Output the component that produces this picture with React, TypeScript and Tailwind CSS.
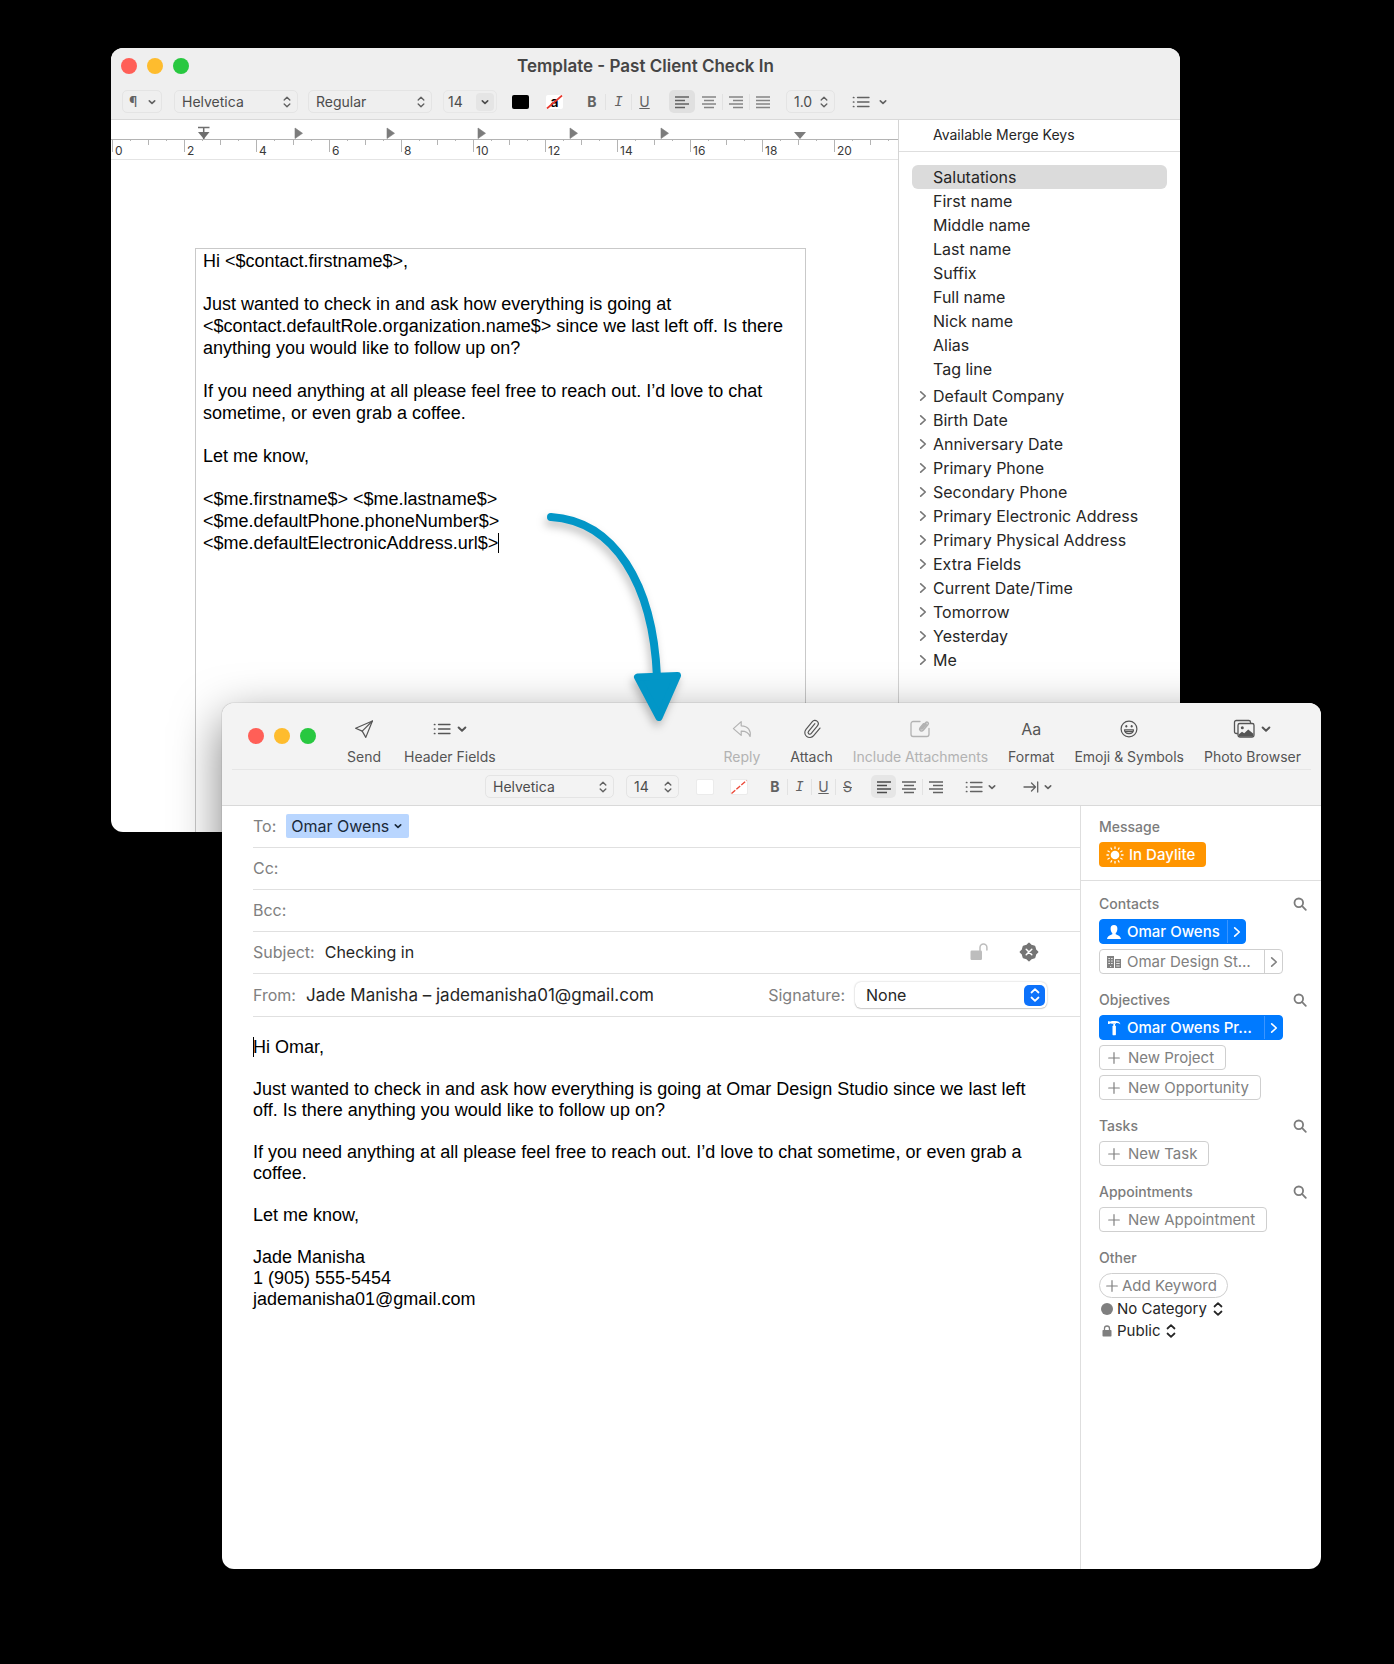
import React, { type ReactNode } from 'react'

/* ---------- icons ---------- */

function ChevronDown({ className = '' }: { className?: string }) {
  return (
    <svg viewBox="0 0 10 10" className={`size-2.5 shrink-0 ${className}`} fill="none" stroke="currentColor" strokeWidth="1.6" strokeLinecap="round" strokeLinejoin="round" aria-hidden="true">
      <path d="M2.300 3.800 5 6.400 7.700 3.800" />
    </svg>
  )
}

function ChevronRight({ className = '' }: { className?: string }) {
  return (
    <svg viewBox="0 0 10 12" className={`h-3 w-2.5 shrink-0 ${className}`} fill="none" stroke="currentColor" strokeWidth="1.6" strokeLinecap="round" strokeLinejoin="round" aria-hidden="true">
      <path d="M2.700 1.800 7.300 6l-4.600 4.200" />
    </svg>
  )
}

function UpDown({ className = '' }: { className?: string }) {
  return (
    <svg viewBox="0 0 10 14" className={`h-3.5 w-2.5 shrink-0 ${className}`} fill="none" stroke="currentColor" strokeWidth="1.4" strokeLinecap="round" strokeLinejoin="round" aria-hidden="true">
      <path d="M2.200 5 5 2.300 7.800 5M2.200 9 5 11.700 7.800 9" />
    </svg>
  )
}

function AlignIcon({ kind }: { kind: 'left' | 'center' | 'right' | 'justify' }) {
  const d = {
    left: 'M1 2h14M1 5.5h10M1 9h14M1 12.5h10',
    center: 'M1 2h14M3 5.5h10M1 9h14M3 12.5h10',
    right: 'M1 2h14M5 5.5h10M1 9h14M5 12.5h10',
    justify: 'M1 2h14M1 5.5h14M1 9h14M1 12.5h14',
  }[kind]
  return (
    <svg viewBox="0 0 16 14" className="h-3.5 w-4" fill="none" stroke="currentColor" strokeWidth="1.4" aria-hidden="true">
      <path d={d} />
    </svg>
  )
}

function ListIcon() {
  return (
    <svg viewBox="0 0 18 14" className="h-3.5 w-[18px] shrink-0" fill="none" stroke="currentColor" strokeWidth="1.3" strokeLinecap="round" aria-hidden="true">
      <path d="M5.500 2.500H17M5.500 7H17M5.500 11.500H17" />
      <path d="M1.500 2.500h.3M1.500 7h.3M1.500 11.500h.3" strokeWidth="1.700" />
    </svg>
  )
}

function SearchIcon() {
  return (
    <svg viewBox="0 0 14 14" className="size-3.5" fill="none" stroke="currentColor" strokeWidth="1.8" strokeLinecap="round" aria-hidden="true">
      <circle cx="5.8" cy="5.8" r="4.3" />
      <path d="m9.200 9.200 3.600 3.600" />
    </svg>
  )
}

function PlusIcon() {
  return (
    <svg viewBox="0 0 12 12" className="size-3 shrink-0" fill="none" stroke="currentColor" strokeWidth="1.2" strokeLinecap="round" aria-hidden="true">
      <path d="M6 .7v10.600M.7 6h10.600" />
    </svg>
  )
}

function SendIcon() {
  return (
    <svg viewBox="0 0 20 20" className="size-5" fill="none" stroke="currentColor" strokeWidth="1.2" strokeLinejoin="round" strokeLinecap="round" aria-hidden="true">
      <path d="M18.400 2 1.600 9.200l6.600 2.900L11.800 18.400Z" />
      <path d="M18.400 2 8.200 12.100" />
    </svg>
  )
}

function ReplyIcon() {
  return (
    <svg viewBox="0 0 20 20" className="size-5" fill="none" stroke="currentColor" strokeWidth="1.2" strokeLinejoin="round" aria-hidden="true">
      <path d="M9.200 2.600 1.400 9.600l7.800 6.800v-4.200c4.600-.1 7.200 1 8.900 5.200 1-5.300-1.600-10.400-8.900-10.600Z" />
    </svg>
  )
}

function ClipIcon() {
  return (
    <svg viewBox="0 0 24 24" className="size-5 rotate-[-5deg]" fill="none" stroke="currentColor" strokeWidth="1.400" strokeLinecap="round" strokeLinejoin="round" aria-hidden="true">
      <path d="m16 6-8.414 8.586a2 2 0 0 0 2.829 2.829l8.414-8.586a4 4 0 1 0-5.657-5.657l-8.379 8.551a6 6 0 1 0 8.485 8.485l8.379-8.551" />
    </svg>
  )
}

function IncludeIcon() {
  return (
    <svg viewBox="0 0 22 20" className="h-5 w-[22px]" fill="none" stroke="currentColor" strokeWidth="1.300" strokeLinecap="round" aria-hidden="true">
      <path d="M11 2.500H4.200a2.200 2.200 0 0 0-2.200 2.200v10.600a2.200 2.200 0 0 0 2.200 2.200h13.600a2.200 2.200 0 0 0 2.200-2.200V9.500" />
      <path d="m17.300 5-4 4.700c-.7.8-1.700 0-1.100-.8l4.400-5.200c1.500-1.600 3.600.1 2.400 1.800l-4.600 5.600c-2 2.100-4.800 0-3.200-2.400l3.300-4" strokeWidth="1.500" />
    </svg>
  )
}

function SmileIcon() {
  return (
    <svg viewBox="0 0 20 20" className="size-5" fill="none" stroke="currentColor" strokeWidth="1.200" aria-hidden="true">
      <circle cx="10" cy="10" r="7.900" />
      <path d="M5.500 10.800h9c-.2 5.200-8.800 5.200-9 0Z" strokeLinejoin="round" />
      <path d="M6 12.600h8" />
      <ellipse cx="7.300" cy="7.300" rx="1" ry="1.300" fill="currentColor" stroke="none" />
      <ellipse cx="12.700" cy="7.300" rx="1" ry="1.300" fill="currentColor" stroke="none" />
    </svg>
  )
}

function PhotosIcon() {
  return (
    <svg viewBox="0 0 22 20" className="h-5 w-[22px]" fill="none" stroke="currentColor" strokeWidth="1.300" aria-hidden="true">
      <path d="M4.800 14.500H3.300a1.800 1.800 0 0 1-1.800-1.800V3.300a1.800 1.800 0 0 1 1.800-1.800h12.400a1.800 1.800 0 0 1 1.800 1.800v.9" />
      <rect x="5" y="4.500" width="16" height="13.500" rx="1.800" />
      <circle cx="9.300" cy="8.700" r="1.500" fill="currentColor" stroke="none" />
      <path d="M5.600 15.600 9 12.700l2.200 1.500 4-3.700 5.200 4.300v2.600H5.600Z" fill="currentColor" stroke="none" />
    </svg>
  )
}

function TabIcon() {
  return (
    <svg viewBox="0 0 16 14" className="h-3.5 w-4 shrink-0" fill="none" stroke="currentColor" strokeWidth="1.300" strokeLinecap="round" strokeLinejoin="round" aria-hidden="true">
      <path d="M1 7h11.500M8.500 3l4 4-4 4M14.700 2v10" />
    </svg>
  )
}

const rayAngles = [0, 30, 60, 90, 120, 150, 180, 210, 240, 270, 300, 330]

function SunIcon() {
  return (
    <svg viewBox="0 0 18 18" className="size-[18px] shrink-0" stroke="currentColor" strokeWidth="1.300" strokeLinecap="round" aria-hidden="true">
      <circle cx="9" cy="9" r="4.300" fill="currentColor" stroke="none" />
      {rayAngles.map((a) => (
        <path key={a} d="M9 .9v1.500" transform={`rotate(${a} 9 9)`} />
      ))}
    </svg>
  )
}

function PersonIcon() {
  return (
    <svg viewBox="0 0 16 16" className="size-4 shrink-0" fill="currentColor" aria-hidden="true">
      <path d="M8 1c2.300 0 3.500 1.700 3.400 3.900-.1 1.900-.8 3.300-1.700 4.100v1.300c1.800 1 4.700 1.600 5.300 4.700H1c.6-3.100 3.500-3.700 5.300-4.700V9C5.400 8.200 4.700 6.800 4.600 4.900 4.500 2.700 5.700 1 8 1Z" />
    </svg>
  )
}

function BuildingIcon() {
  return (
    <svg viewBox="0 0 16 14" className="h-3.5 w-4 shrink-0" aria-hidden="true">
      <path d="M1 1h7v12H1Z M9 4h6v9H9Z" fill="currentColor" />
      <path d="M2.300 3.500h1.700M5 3.500h1.700M2.300 6h1.700M5 6h1.700M2.300 8.500h1.700M5 8.500h1.700M4 11.500h1.200M10.200 6h3.500M10.200 8.500h3.500M10.200 11h3.500" stroke="#fff" strokeWidth=".8" />
    </svg>
  )
}

function HammerIcon() {
  return (
    <svg viewBox="0 0 16 18" className="h-[18px] w-4 shrink-0" fill="currentColor" aria-hidden="true">
      <path d="M2 2.200h1.700V2.700L6 2h3.200c2.800 0 4.600 1.200 5.200 3.200C13 4.200 11.500 3.900 10 4.100V4.800H6.300L3.700 4.300v.7H2Z" />
      <path d="M7.300 5h1.800v2H7.300Z" />
      <rect x="6.500" y="6.800" width="3.400" height="9.400" rx=".6" />
    </svg>
  )
}

function UnlockIcon() {
  return (
    <svg viewBox="0 0 20 20" className="size-5" aria-hidden="true">
      <rect x="1.500" y="8.500" width="11.500" height="9.500" rx="1.200" fill="#bdbdbd" />
      <path d="M11 8.500V5.500a3.300 3.300 0 0 1 6.900 0V8" fill="none" stroke="#bdbdbd" strokeWidth="1.500" strokeLinecap="round" />
    </svg>
  )
}

function BadgeIcon() {
  return (
    <svg viewBox="0 0 20 20" className="size-5" aria-hidden="true">
      <path d="M10 1.200 12.200 3.300 15.700 4.300 16.700 7.800 18.800 10 16.700 12.200 15.700 15.700 12.200 16.700 10 18.800 7.800 16.700 4.300 15.700 3.300 12.200 1.200 10 3.300 7.800 4.300 4.300 7.800 3.300Z" fill="#747474" stroke="#747474" strokeWidth="1.200" strokeLinejoin="round" />
      <path d="m7.200 7.200 5.600 5.600M12.800 7.200l-5.600 5.600" stroke="#fff" strokeWidth="1.500" strokeLinecap="round" />
    </svg>
  )
}

function LockIcon() {
  return (
    <svg viewBox="0 0 10 12" className="h-3 w-2.5" aria-hidden="true">
      <rect x=".5" y="5" width="9" height="6.500" rx=".8" fill="#7f7f7f" />
      <path d="M2.500 5V3.500a2.500 2.500 0 0 1 5 0V5" fill="none" stroke="#7f7f7f" strokeWidth="1.300" />
    </svg>
  )
}

/* ---------- shared controls ---------- */

function TrafficLights() {
  return (
    <div className="flex shrink-0 gap-2.5">
      <button aria-label="Close" className="size-4 rounded-full bg-[#ff5f57]" />
      <button aria-label="Minimize" className="size-4 rounded-full bg-[#febc2e]" />
      <button aria-label="Zoom" className="size-4 rounded-full bg-[#28c840]" />
    </div>
  )
}

function PopUp({ label, value, className }: { label: string; value: string; className: string }) {
  return (
    <span className={`relative flex h-[23px] shrink-0 items-center rounded-[5px] border border-[#e4e4e4] text-[#4c4c4c] ${className}`}>
      <select aria-label={label} className="h-full w-full appearance-none bg-transparent pl-[7px] text-sm leading-5 outline-none">
        <option>{value}</option>
      </select>
      <UpDown className="pointer-events-none absolute right-[5px] text-[#626262]" />
    </span>
  )
}

function StyleButton({ label, divided, width, children }: { label: string; divided?: boolean; width: string; children: ReactNode }) {
  return (
    <button aria-label={label} className={`flex h-4 items-center justify-center text-sm leading-4 ${width} ${divided ? 'border-l border-[#e2e2e2]' : ''}`}>
      {children}
    </button>
  )
}

/* ---------- template window ---------- */

const plainKeys = ['First name', 'Middle name', 'Last name', 'Suffix', 'Full name', 'Nick name', 'Alias', 'Tag line']
const groupKeys = [
  'Default Company', 'Birth Date', 'Anniversary Date', 'Primary Phone', 'Secondary Phone', 'Primary Electronic Address',
  'Primary Physical Address', 'Extra Fields', 'Current Date/Time', 'Tomorrow', 'Yesterday', 'Me',
]

const UNIT = 36.1
const halves = Array.from({ length: 44 }, (_, i) => i)
const tabStops = [184, 276, 367, 459, 550]

function Ruler() {
  return (
    <div className="h-10 overflow-hidden border-b border-[#e4e4e4]">
      <svg width="787" height="40" viewBox="0 0 787 40" className="block max-w-none" aria-label="Ruler">
        <path d="M0 19.500H1600" stroke="#b4b4b4" />
        {halves.map((i) => {
          const x = 1.5 + Math.round((i * UNIT) / 2)
          const len = i % 4 === 0 ? 13 : i % 2 === 0 ? 6 : 2
          return <path key={i} d={`M${x} 19v${len}`} stroke="#b4b4b4" />
        })}
        {halves.filter((i) => i % 4 === 0).map((i) => (
          <text key={i} x={4 + Math.round((i * UNIT) / 2)} y="35" fontSize="12" fill="#3a3a3a" fontFamily="Inter, sans-serif">{i / 2}</text>
        ))}
        {tabStops.map((x) => (
          <path key={x} d={`M${x} 8v10.500l7.500-5.200Z`} fill="#7c7c7c" stroke="#7c7c7c" strokeWidth=".6" strokeLinejoin="round" />
        ))}
        <path d="M87 7.500h11.500M92.700 7v12" stroke="#6f6f6f" strokeWidth="1.500" />
        <path d="M87 12h11.500l-5.700 7Z" fill="#6f6f6f" />
        <path d="M683 12h12l-6 7Z" fill="#7c7c7c" />
      </svg>
    </div>
  )
}

function TemplateWindow() {
  return (
    <section className="mr-[214px] ml-[111px] overflow-hidden rounded-xl bg-white" aria-label="Template">
      <header className="border-b border-[#d9d9d9] bg-[#efefef]">
        <div className="grid h-9 grid-cols-[1fr_auto_1fr] items-center px-2.5">
          <TrafficLights />
          <h1 className="text-[17px] leading-6 font-semibold text-[#454545]">Template - Past Client Check In</h1>
        </div>
        <div className="flex h-[35px] items-center pl-[11px] text-[#626262]">
          <button aria-label="Paragraph style" className="flex h-[23px] w-10 shrink-0 items-center justify-between rounded-[5px] border border-[#e4e4e4] pr-1 pl-1.5 text-sm leading-5">
            ¶<ChevronDown />
          </button>
          <PopUp label="Font" value="Helvetica" className="ml-3 w-[124px]" />
          <PopUp label="Typeface" value="Regular" className="ml-2.5 w-[124px]" />
          <label className="ml-[11px] flex h-[23px] w-[54px] shrink-0 items-center rounded-[5px] border border-[#e7e7e7] pr-0.5 text-sm text-[#4c4c4c]">
            <input aria-label="Font size" defaultValue="14" className="w-full min-w-0 bg-transparent pl-1 outline-none" />
            <span className="flex h-[18px] w-[18px] shrink-0 items-center justify-center rounded bg-[#e5e5e5]"><ChevronDown /></span>
          </label>
          <button aria-label="Text color" className="ml-[15px] h-3.5 w-[17px] shrink-0 rounded-xs bg-black" />
          <button aria-label="Highlight color" className="relative ml-[17px] flex h-3.5 w-[17px] shrink-0 items-center justify-center rounded-xs bg-white text-sm leading-3 font-semibold text-black">
            a
            <svg viewBox="0 0 17 14" className="absolute inset-0" stroke="#e8352a" strokeWidth="1.700" aria-hidden="true"><path d="M1 13.500 16 .5" /></svg>
          </button>
          <div className="ml-4 flex">
            <StyleButton label="Bold" width="w-[26px]"><b>B</b></StyleButton>
            <StyleButton label="Italic" width="w-[26px]" divided><i className="font-['Liberation_Mono']">I</i></StyleButton>
            <StyleButton label="Underline" width="w-[26px]" divided><u>U</u></StyleButton>
          </div>
          <div className="ml-3 flex items-center text-[#858585]">
            <button aria-label="Align left" className="flex h-[23px] w-[26px] items-center justify-center rounded-[5px] bg-[#e0e0e0] text-[#626262]"><AlignIcon kind="left" /></button>
            <StyleButton label="Align center" width="w-[27px]"><AlignIcon kind="center" /></StyleButton>
            <StyleButton label="Align right" width="w-[27px]" divided><AlignIcon kind="right" /></StyleButton>
            <StyleButton label="Justify" width="w-[27px]" divided><AlignIcon kind="justify" /></StyleButton>
          </div>
          <PopUp label="Line spacing" value="1.0" className="ml-2.5 w-[49px]" />
          <button aria-label="Lists" className="ml-[17px] flex items-center gap-2"><ListIcon /><ChevronDown /></button>
        </div>
      </header>

      <div className="flex">
        <div className="flex min-w-0 flex-1 flex-col">
          <Ruler />
          <div className="flex flex-1 pt-[88px] pr-[92px] pl-21">
            <div role="textbox" aria-multiline="true" aria-label="Template text" className="flex min-h-[584px] flex-1 flex-col gap-[21px] border border-b-0 border-[#c9c9c9] px-[7px] pt-px font-['Liberation_Sans',sans-serif] text-lg leading-[22px] text-black">
              <p>{'Hi <$contact.firstname$>,'}</p>
              <p>{'Just wanted to check in and ask how everything is going at <$contact.defaultRole.organization.name$> since we last left off. Is there anything you would like to follow up on?'}</p>
              <p>If you need anything at all please feel free to reach out. I’d love to chat sometime, or even grab a coffee.</p>
              <p>Let me know,</p>
              <p>
                {'<$me.firstname$> <$me.lastname$>'}<br />
                {'<$me.defaultPhone.phoneNumber$>'}<br />
                {'<$me.defaultElectronicAddress.url$>'}<span className="inline-block h-5 w-px bg-black align-text-bottom" />
              </p>
            </div>
          </div>
        </div>

        <aside className="w-[282px] shrink-0 border-l border-[#d4d4d4] text-[#262626]">
          <h2 className="border-b border-[#dedede] pt-[5px] pb-1.5 pl-[34px] text-sm leading-5">Available Merge Keys</h2>
          <ul className="px-[13px] pt-[13px] text-base leading-6">
            <li><button className="block w-full rounded-md bg-[#dbdbdb] pl-[21px] text-left">Salutations</button></li>
            {plainKeys.map((k) => (
              <li key={k}><button className="block w-full pl-[21px] text-left">{k}</button></li>
            ))}
          </ul>
          <ul className="px-[13px] pt-[3px] text-base leading-6">
            {groupKeys.map((k) => (
              <li key={k}>
                <button className="flex w-full items-center gap-[5px] pl-1.5 text-left"><ChevronRight className="text-[#767676]" />{k}</button>
              </li>
            ))}
          </ul>
        </aside>
      </div>
    </section>
  )
}

/* ---------- mail window ---------- */

function ToolItem({ label, disabled, className = '', children }: { label: string; disabled?: boolean; className?: string; children: ReactNode }) {
  return (
    <button disabled={disabled} className={`flex flex-col items-center gap-2 text-sm leading-5 ${disabled ? 'text-[#b2b2b2]' : 'text-[#555555]'} ${className}`}>
      <span className="flex h-5 items-center gap-1.5">{children}</span>
      {label}
    </button>
  )
}

function FieldRow({ id, label, value, children }: { id: string; label: string; value?: string; children?: ReactNode }) {
  return (
    <div className="ml-[31px] flex h-[42px] items-center border-b border-[#e0e0e0] pr-[33px] pb-0.5 text-base leading-6">
      <label htmlFor={id} className="shrink-0 text-[#808080]">{label}</label>
      <input id={id} defaultValue={value} className="ml-2.5 min-w-0 flex-1 bg-transparent text-[#262626] outline-none" />
      {children}
    </div>
  )
}

function SideSection({ title, searchable, children }: { title: string; searchable?: boolean; children: ReactNode }) {
  return (
    <section className="flex flex-col items-start gap-[5px]">
      <div className="flex w-full items-center justify-between text-[#7c7c7c]">
        <h3 className="text-sm leading-5 font-medium">{title}</h3>
        {searchable && <button aria-label={`Search ${title}`}><SearchIcon /></button>}
      </div>
      {children}
    </section>
  )
}

function LinkChip({ icon, label, filled, className = '' }: { icon: ReactNode; label: string; filled?: boolean; className?: string }) {
  return (
    <div className={`flex h-[25px] items-stretch rounded border text-[15px] leading-5 ${filled ? 'border-[#007aff] bg-[#007aff] font-medium text-white' : 'border-[#cfcfcf] bg-white text-[#808080]'} ${className}`}>
      <button className="flex flex-1 items-center gap-1 pl-1.5 whitespace-nowrap">{icon}<span className="pl-px">{label}</span></button>
      <button aria-label={`Open ${label}`} className={`flex w-[18px] shrink-0 items-center justify-center border-l ${filled ? 'border-[#3b95ff]' : 'border-[#cfcfcf]'}`}><ChevronRight /></button>
    </div>
  )
}

function NewChip({ label }: { label: string }) {
  return (
    <button className="flex h-[25px] items-center gap-2 rounded border border-[#cfcfcf] bg-white pr-[11px] pl-2 text-[15px] leading-5 text-[#808080]">
      <PlusIcon />{label}
    </button>
  )
}

function MailWindow() {
  return (
    <section aria-label="New message" className="relative -mt-[129px] mr-[73px] ml-[222px] rounded-xl bg-white shadow-[0_0_1px_rgba(0,0,0,0.6),0_16px_48px_rgba(0,0,0,0.5)]">
      <header className="rounded-t-xl border-b border-[#d9d9d9] bg-[#f3f3f3]">
        <div className="mx-2.5 flex items-start border-b border-[#e6e6e6] pt-4 pr-2.5 pb-0.5 pl-4">
          <div className="pt-[9px]"><TrafficLights /></div>
          <ToolItem label="Send" className="ml-[31px]"><SendIcon /></ToolItem>
          <ToolItem label="Header Fields" className="ml-[23px]"><ListIcon /><ChevronDown className="scale-125" /></ToolItem>
          <div className="ml-auto flex gap-5">
            <ToolItem label="Reply" disabled className="mr-2.5"><ReplyIcon /></ToolItem>
            <ToolItem label="Attach"><ClipIcon /></ToolItem>
            <ToolItem label="Include Attachments" disabled><IncludeIcon /></ToolItem>
            <ToolItem label="Format"><span className="text-base">Aa</span></ToolItem>
            <ToolItem label="Emoji & Symbols"><SmileIcon /></ToolItem>
            <ToolItem label="Photo Browser"><PhotosIcon /><ChevronDown className="scale-125" /></ToolItem>
          </div>
        </div>
        <div className="flex h-[35px] items-center pb-0.5 pl-[263px] text-[#626262]">
          <PopUp label="Font" value="Helvetica" className="w-[129px]" />
          <PopUp label="Font size" value="14" className="ml-3 w-[53px]" />
          <button aria-label="Text color" className="ml-[17px] h-4 w-[18px] shrink-0 rounded-xs border border-[#ebebeb] bg-white" />
          <button aria-label="Highlight color" className="ml-4 flex h-4 w-[18px] shrink-0 rounded-xs border border-[#ebebeb] bg-white">
            <svg viewBox="0 0 16 14" className="size-full" stroke="#ec4a3a" strokeWidth="1.400" strokeDasharray="5 1.500" aria-hidden="true"><path d="M.5 13.500 15.500.5" /></svg>
          </button>
          <div className="ml-[15px] flex">
            <StyleButton label="Bold" width="w-6"><b>B</b></StyleButton>
            <StyleButton label="Italic" width="w-6" divided><i className="font-['Liberation_Mono']">I</i></StyleButton>
            <StyleButton label="Underline" width="w-6" divided><u>U</u></StyleButton>
            <StyleButton label="Strikethrough" width="w-6" divided><s>S</s></StyleButton>
          </div>
          <div className="ml-3 flex items-center">
            <button aria-label="Align left" className="flex h-[23px] w-[25px] items-center justify-center rounded-[5px] bg-[#e6e6e6] text-[#4c4c4c]"><AlignIcon kind="left" /></button>
            <StyleButton label="Align center" width="w-[26px]"><AlignIcon kind="center" /></StyleButton>
            <StyleButton label="Align right" width="w-[26px]" divided><AlignIcon kind="right" /></StyleButton>
          </div>
          <button aria-label="Lists" className="ml-[17px] flex items-center gap-1"><ListIcon /><ChevronDown /></button>
          <button aria-label="Indent" className="ml-[26px] flex items-center gap-1"><TabIcon /><ChevronDown /></button>
        </div>
      </header>

      <div className="flex min-h-[763px]">
        <div className="min-w-0 flex-1">
          <div className="ml-[31px] flex h-[42px] items-center border-b border-[#e0e0e0] pb-px text-base leading-6">
            <span className="text-[#808080]">To:</span>
            <button className="ml-2.5 flex items-center gap-1 rounded-xs bg-[#b9d6ff] pr-1.5 pl-[5px] text-[#1b2a3a]">
              Omar Owens<ChevronDown />
            </button>
          </div>
          <FieldRow id="cc" label="Cc:" />
          <FieldRow id="bcc" label="Bcc:" />
          <FieldRow id="subject" label="Subject:" value="Checking in">
            <button aria-label="Encrypt"><UnlockIcon /></button>
            <button aria-label="Sign" className="mr-2 ml-[30px]"><BadgeIcon /></button>
          </FieldRow>
          <div className="ml-[31px] flex h-[43px] items-center border-b border-[#e0e0e0] pr-[33px] text-base leading-6">
            <label htmlFor="from" className="shrink-0 text-[#808080]">From:</label>
            <select id="from" className="ml-2.5 min-w-0 appearance-none bg-transparent text-[17px] text-[#262626] outline-none">
              <option>Jade Manisha – jademanisha01@gmail.com</option>
            </select>
            <label htmlFor="signature" className="mr-2.5 ml-auto shrink-0 text-[#808080]">Signature:</label>
            <span className="relative flex h-[26px] w-48 shrink-0 items-center rounded-md bg-white shadow-[0_0_2px_rgba(0,0,0,0.25),0_1px_1px_rgba(0,0,0,0.15)]">
              <select id="signature" className="h-full w-full appearance-none bg-transparent pl-[11px] text-[#262626] outline-none">
                <option>None</option>
              </select>
              <span className="pointer-events-none absolute right-0.5 flex size-[21px] items-center justify-center rounded-[5px] bg-[#0d72fb] text-white">
                <UpDown className="scale-125" />
              </span>
            </span>
          </div>
          <div role="textbox" aria-multiline="true" aria-label="Message body" className="flex flex-col gap-[21px] pt-5 pr-[31px] pl-[31px] font-['Liberation_Sans',sans-serif] text-lg leading-[21px] text-black">
            <p><span className="-mr-px inline-block h-5 w-px bg-black align-text-bottom" />Hi Omar,</p>
            <p>Just wanted to check in and ask how everything is going at Omar Design Studio since we last left off. Is there anything you would like to follow up on?</p>
            <p>If you need anything at all please feel free to reach out. I’d love to chat sometime, or even grab a coffee.</p>
            <p>Let me know,</p>
            <p>Jade Manisha<br />1 (905) 555-5454<br />jademanisha01@gmail.com</p>
          </div>
        </div>

        <aside className="w-[241px] shrink-0 border-l border-[#dedede]">
          <div className="border-b border-[#dedede] pt-[11px] pr-3.5 pb-[13px] pl-[18px]">
            <SideSection title="Message">
              <button className="flex h-[25px] items-center gap-[5px] rounded bg-[#ff9500] pr-[11px] pl-[7px] text-[15px] leading-5 font-medium text-white">
                <SunIcon />In Daylite
              </button>
            </SideSection>
          </div>
          <div className="flex flex-col gap-4 pt-[13px] pr-3.5 pl-[18px]">
            <SideSection title="Contacts" searchable>
              <LinkChip icon={<PersonIcon />} label="Omar Owens" filled className="w-[147px]" />
              <LinkChip icon={<BuildingIcon />} label="Omar Design St…" className="w-[184px]" />
            </SideSection>
            <SideSection title="Objectives" searchable>
              <LinkChip icon={<HammerIcon />} label="Omar Owens Pr…" filled className="w-[184px]" />
              <NewChip label="New Project" />
              <NewChip label="New Opportunity" />
            </SideSection>
            <SideSection title="Tasks" searchable>
              <NewChip label="New Task" />
            </SideSection>
            <SideSection title="Appointments" searchable>
              <NewChip label="New Appointment" />
            </SideSection>
            <SideSection title="Other">
              <div className="flex flex-col items-start text-[15px] leading-[22px] text-[#262626]">
                <button className="flex h-[25px] items-center gap-1 rounded-full border border-[#cfcfcf] pr-2.5 pl-1.5 text-[#808080]">
                  <PlusIcon />Add Keyword
                </button>
                <button className="flex items-center gap-1"><span className="ml-0.5 size-3 rounded-full bg-[#7f7f7f]" />No Category<UpDown className="ml-0.5 scale-125" /></button>
                <button className="flex items-center gap-1"><span className="ml-0.5 flex w-3 justify-center"><LockIcon /></span>Public<UpDown className="ml-0.5 scale-125" /></button>
              </div>
            </SideSection>
          </div>
        </aside>
      </div>
    </section>
  )
}

/* Arrow from the template text to the finished message. */
function Arrow() {
  return (
    <svg viewBox="0 0 180 240" className="pointer-events-none absolute top-[490px] left-[530px] h-60 w-[180px] drop-shadow-[-2px_5px_4px_rgba(0,0,0,0.25)]" aria-hidden="true">
      <path d="M21 27C84 31 123 93 127 187" fill="none" stroke="#0296c7" strokeWidth="8" strokeLinecap="round" />
      <path d="M107.500 187 147.500 185.500 129 227.500Z" fill="#0296c7" stroke="#0296c7" strokeWidth="7" strokeLinejoin="round" />
    </svg>
  )
}

export default function App() {
  return (
    <main className="relative min-h-screen bg-black pt-12 pb-24 font-['Inter',sans-serif]">
      <TemplateWindow />
      <MailWindow />
      <Arrow />
    </main>
  )
}
